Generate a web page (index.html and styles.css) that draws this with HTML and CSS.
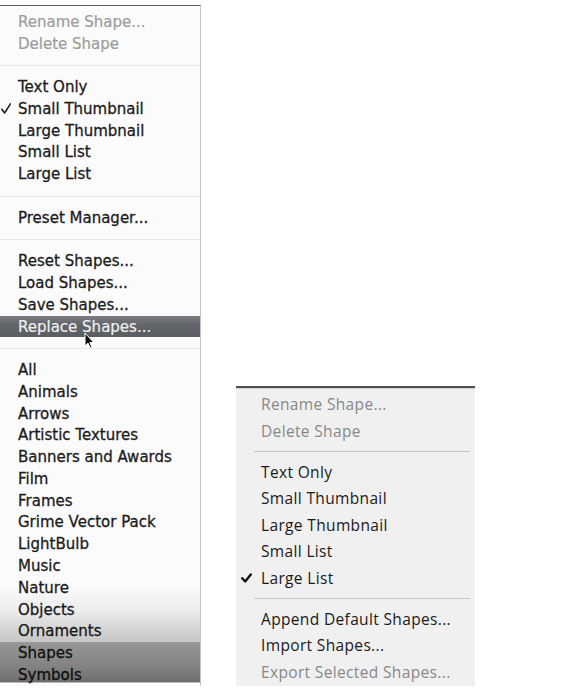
FILE: index.html
```html
<!DOCTYPE html>
<html lang="en">
<head>
<meta charset="utf-8">
<title>Shape Menus</title>
<link rel="stylesheet" href="styles.css">
</head>
<body>
<div class="stage">
  <div class="mac-menu">
    <div class="m-item disabled"><span class="m-check"></span>Rename Shape...</div>
    <div class="m-item disabled"><span class="m-check"></span>Delete Shape</div>
    <div class="m-sep"></div>
    <div class="m-item"><span class="m-check"></span>Text Only</div>
    <div class="m-item"><span class="m-check"><svg class="m-tick" viewBox="0 0 10 11" width="10" height="11"><path d="M0.8 6.2 L3.6 10 L9.4 0.8" fill="none" stroke="#1a1a1a" stroke-width="1.5" stroke-linecap="round" stroke-linejoin="round"/></svg></span>Small Thumbnail</div>
    <div class="m-item"><span class="m-check"></span>Large Thumbnail</div>
    <div class="m-item"><span class="m-check"></span>Small List</div>
    <div class="m-item"><span class="m-check"></span>Large List</div>
    <div class="m-sep"></div>
    <div class="m-item"><span class="m-check"></span>Preset Manager...</div>
    <div class="m-sep"></div>
    <div class="m-item"><span class="m-check"></span>Reset Shapes...</div>
    <div class="m-item"><span class="m-check"></span>Load Shapes...</div>
    <div class="m-item"><span class="m-check"></span>Save Shapes...</div>
    <div class="m-item selected"><span class="m-check"></span>Replace Shapes...</div>
    <div class="m-sep"></div>
    <div class="m-item"><span class="m-check"></span>All</div>
    <div class="m-item"><span class="m-check"></span>Animals</div>
    <div class="m-item"><span class="m-check"></span>Arrows</div>
    <div class="m-item"><span class="m-check"></span>Artistic Textures</div>
    <div class="m-item"><span class="m-check"></span>Banners and Awards</div>
    <div class="m-item"><span class="m-check"></span>Film</div>
    <div class="m-item"><span class="m-check"></span>Frames</div>
    <div class="m-item"><span class="m-check"></span>Grime Vector Pack</div>
    <div class="m-item"><span class="m-check"></span>LightBulb</div>
    <div class="m-item"><span class="m-check"></span>Music</div>
    <div class="m-item"><span class="m-check"></span>Nature</div>
    <div class="m-item"><span class="m-check"></span>Objects</div>
    <div class="m-item"><span class="m-check"></span>Ornaments</div>
    <div class="m-item"><span class="m-check"></span>Shapes</div>
    <div class="m-item"><span class="m-check"></span>Symbols</div>
    <div class="m-shade"></div>
    <svg class="cursor" viewBox="0 0 11 17" width="11" height="17"><path d="M1 1 L1 14 L4 11.2 L6.2 16 L8 15.2 L5.9 10.5 L9.8 10.5 Z" fill="#111" stroke="#fff" stroke-width="1" stroke-linejoin="round"/></svg>
  </div>

  <div class="win-menu">
    <div class="w-item disabled"><span class="w-check"></span>Rename Shape...</div>
    <div class="w-item disabled"><span class="w-check"></span>Delete Shape</div>
    <div class="w-sep"></div>
    <div class="w-item"><span class="w-check"></span>Text Only</div>
    <div class="w-item"><span class="w-check"></span>Small Thumbnail</div>
    <div class="w-item"><span class="w-check"></span>Large Thumbnail</div>
    <div class="w-item"><span class="w-check"></span>Small List</div>
    <div class="w-item"><span class="w-check"><svg viewBox="0 0 11 10" width="11" height="10"><path d="M1.2 5.2 L4.2 8.4 L9.8 1.4" fill="none" stroke="#111" stroke-width="2.4" stroke-linecap="round" stroke-linejoin="round"/></svg></span>Large List</div>
    <div class="w-sep"></div>
    <div class="w-item"><span class="w-check"></span>Append Default Shapes...</div>
    <div class="w-item"><span class="w-check"></span>Import Shapes...</div>
    <div class="w-item disabled"><span class="w-check"></span>Export Selected Shapes...</div>
  </div>
</div>
</body>
</html>
```

FILE: styles.css
```css
html, body {
  margin: 0;
  padding: 0;
  background: #ffffff;
}

.stage {
  display: flex;
  align-items: flex-start;
  width: 563px;
  height: 700px;
}

/* ---------- Mac style menu (left) ---------- */
.mac-menu {
  position: relative;
  margin-top: 5px;
  width: 201px;
  height: 681px;
  overflow: hidden;
  background: #fbfbfb;
  border-top: 1px solid #5c5c5c;
  border-right: 1px solid #c4c4c4;
  padding-top: 5px;
  box-sizing: border-box;
  font-family: "DejaVu Sans", "Verdana", sans-serif;
  font-size: 15px;
  color: #1c1c1c;
  -webkit-text-stroke: 0.3px #1c1c1c;
}

.m-item {
  display: flex;
  align-items: center;
  height: 21.77px;
  white-space: nowrap;
}

.m-item.disabled {
  color: #9c9c9c;
  -webkit-text-stroke: 0.2px #9c9c9c;
}

.m-item.selected {
  background: linear-gradient(#7a7d82, #63666b 40%, #5a5d62);
  color: #f0f0f0;
  -webkit-text-stroke: 0.2px #f0f0f0;
}

.m-check {
  display: flex;
  align-items: center;
  width: 18px;
  height: 100%;
  padding-left: 1px;
  box-sizing: border-box;
  flex: none;
}

.m-tick {
  display: block;
}

.m-sep {
  height: 21.77px;
  display: flex;
  align-items: center;
}

.m-sep::after {
  content: "";
  display: block;
  width: 100%;
  height: 1px;
  background: #e6e6e6;
}

.m-shade {
  position: absolute;
  left: 0;
  right: 0;
  bottom: 0;
  height: 101px;
  pointer-events: none;
  background: linear-gradient(
    to bottom,
    rgba(0, 0, 0, 0) 0%,
    rgba(0, 0, 0, 0.06) 25%,
    rgba(0, 0, 0, 0.16) 45%,
    rgba(0, 0, 0, 0.21) 56%,
    rgba(0, 0, 0, 0.40) 57%,
    rgba(0, 0, 0, 0.48) 80%,
    rgba(0, 0, 0, 0.56) 96%,
    rgba(0, 0, 0, 0.0) 97%
  );
}

.cursor {
  position: absolute;
  left: 84px;
  top: 326px;
}

/* ---------- Windows style menu (right) ---------- */
.win-menu {
  margin-top: 386px;
  margin-left: 35px;
  width: 239px;
  background: #f0f0f0;
  border-top: 2px solid #4f4f4f;
  box-shadow: inset 0 1px 0 #d4d4d4;
  padding: 3px 0 1px;
  font-family: "Open Sans", "Noto Sans", sans-serif;
  font-size: 15.5px;
  letter-spacing: 0.35px;
  color: #1a1a1a;
}

.w-item {
  display: flex;
  align-items: center;
  height: 26.5px;
  white-space: nowrap;
}

.w-item.disabled {
  color: #888888;
}

.w-check {
  display: flex;
  align-items: center;
  width: 25px;
  height: 100%;
  padding-left: 5px;
  box-sizing: border-box;
  flex: none;
}

.w-sep {
  height: 14.5px;
  display: flex;
  align-items: center;
  padding: 0 5px 0 18px;
}

.w-sep::after {
  content: "";
  display: block;
  width: 100%;
  height: 1px;
  background: #c6c6c6;
}
```
